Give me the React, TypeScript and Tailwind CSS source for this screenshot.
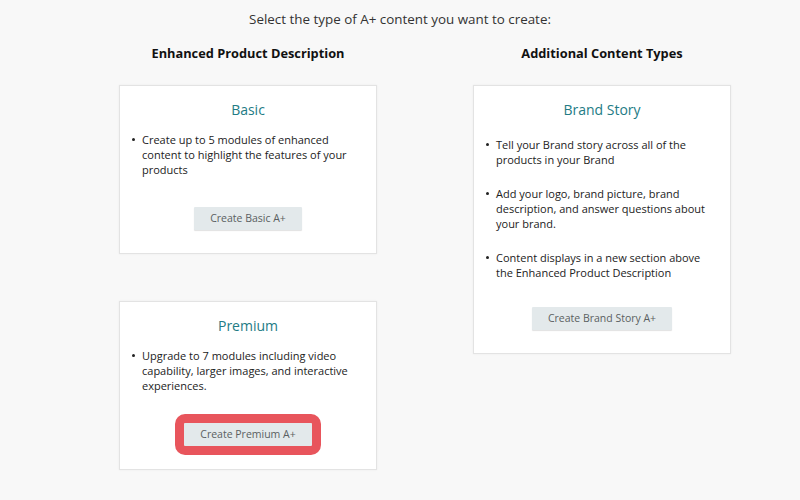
const font = { fontFamily: '"Open Sans", "Liberation Sans", sans-serif' };

type CardProps = {
  title: string;
  items: string[];
  button: string;
  highlight?: boolean;
  spaced?: boolean;
};

const Card = ({ title, items, button, highlight, spaced }: CardProps) => (
  <div className="bg-white border border-[#e3e3e3] shadow-[0_0_2px_rgba(0,0,0,0.06)] px-[12px] pt-[14px] pb-[23px] flex flex-col items-center">
    <h3 className="text-[14px] leading-[20px] text-[#237b85]">{title}</h3>
    <ul className={`self-stretch flex flex-col ${spaced ? "mt-[17px] gap-[19px]" : "mt-[12px]"}`}>
      {items.map((item) => (
        <li key={item} className="flex text-[11px] leading-[15px] text-[#222]">
          <span className="w-[10px] shrink-0 pt-[6px]">
            <span className="block w-[3px] h-[3px] rounded-full bg-[#222]"></span>
          </span>
          <span>{item}</span>
        </li>
      ))}
    </ul>
    <button
      className={`${spaced ? "mt-[27px]" : "mt-[30px]"} h-[23px] px-[16px] bg-[#e3e9eb] rounded-[1px] text-[10.5px] text-[#5a5f61] shadow-[0_1px_1px_rgba(0,0,0,0.12)] ${
        highlight ? "outline-solid outline-[9px] outline-[#e8555c]" : ""
      }`}
    >
      {button}
    </button>
  </div>
);

export default function App() {
  return (
    <div className="w-[800px] h-[500px] bg-[#f8f8f8] overflow-hidden" style={font}>
      <p className="pt-[9px] text-center text-[13.4px] leading-[20px] text-[#333]">
        Select the type of A+ content you want to create:
      </p>
      <div className="mt-[14px] pl-[50px] grid grid-cols-[258px_258px] gap-x-[96px] justify-center">
        <div className="flex flex-col">
          <h2 className="text-center text-[12.8px] leading-[20px] font-bold text-[#111]">
            Enhanced Product Description
          </h2>
          <div className="mt-[22px] flex flex-col gap-[47px]">
            <Card
              title="Basic"
              items={["Create up to 5 modules of enhanced content to highlight the features of your products"]}
              button="Create Basic A+"
            />
            <Card
              title="Premium"
              items={["Upgrade to 7 modules including video capability, larger images, and interactive experiences."]}
              button="Create Premium A+"
              highlight
            />
          </div>
        </div>
        <div className="flex flex-col">
          <h2 className="text-center text-[12.8px] leading-[20px] font-bold text-[#111]">
            Additional Content Types
          </h2>
          <div className="mt-[22px]">
            <Card
              title="Brand Story"
              items={[
                "Tell your Brand story across all of the products in your Brand",
                "Add your logo, brand picture, brand description, and answer questions about your brand.",
                "Content displays in a new section above the Enhanced Product Description",
              ]}
              button="Create Brand Story A+"
              spaced
            />
          </div>
        </div>
      </div>
    </div>
  );
}
